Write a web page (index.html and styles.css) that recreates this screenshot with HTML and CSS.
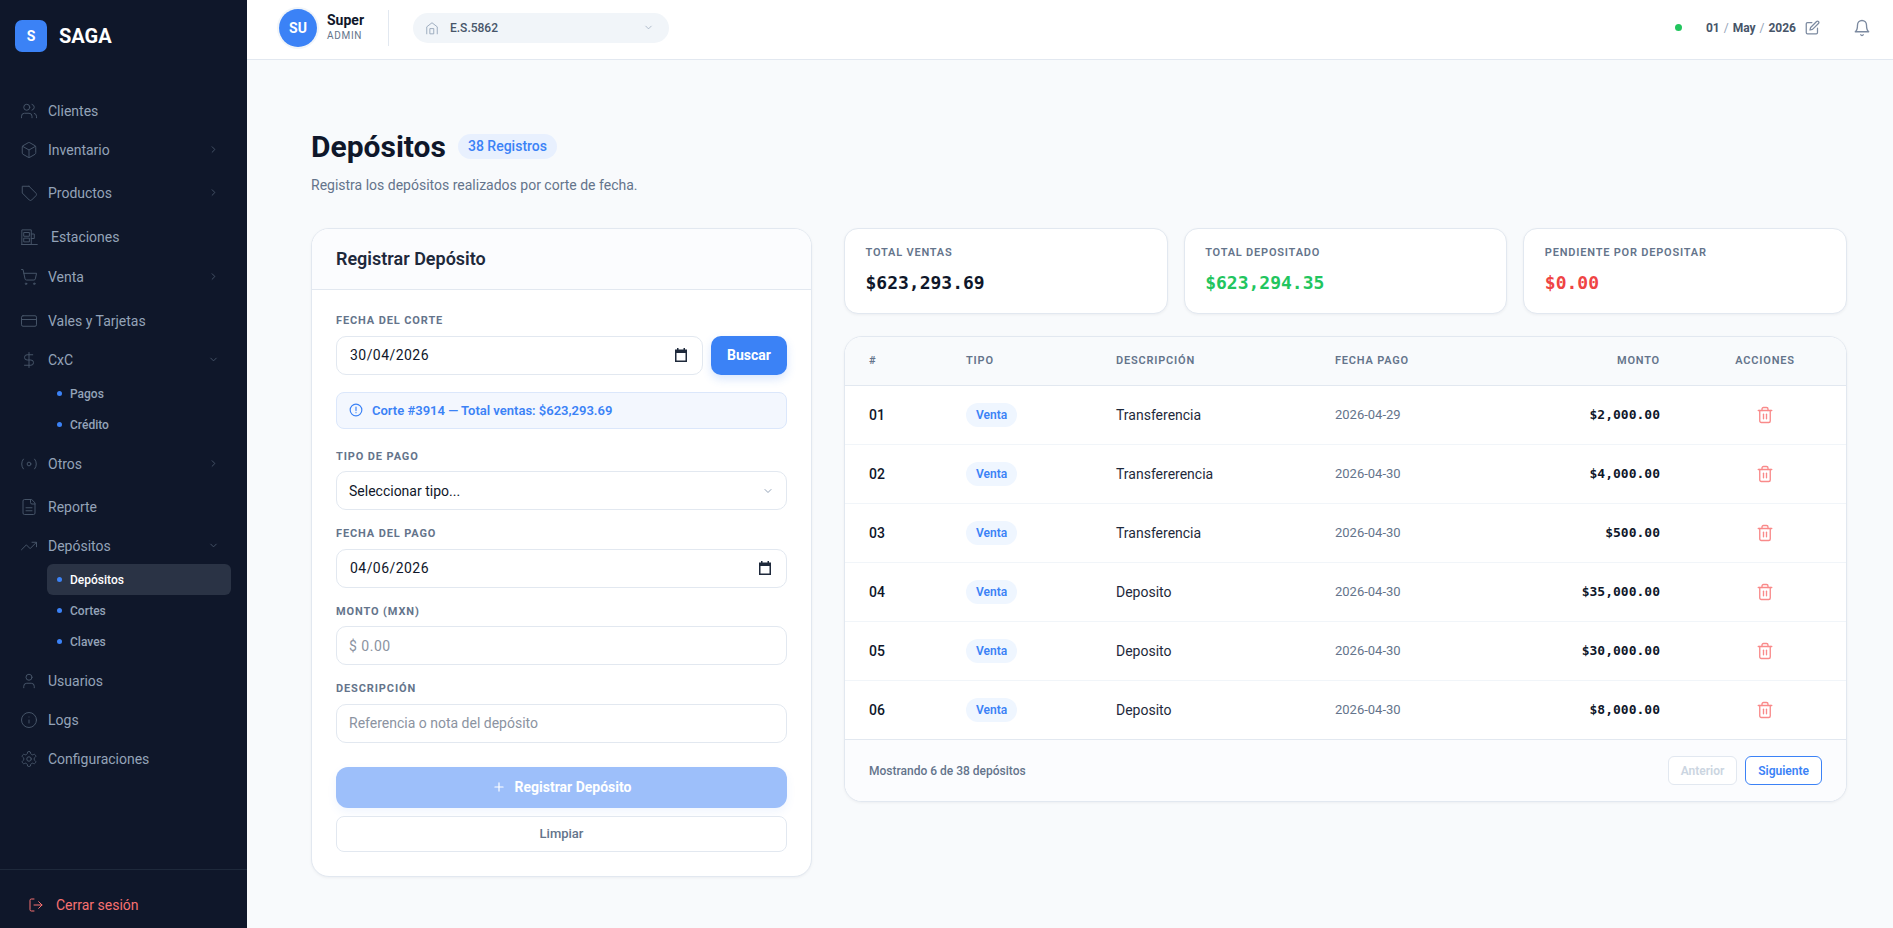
FILE: index.html
```html
<!DOCTYPE html>
<html lang="es">
<head>
    <meta charset="UTF-8">
    <meta name="viewport" content="width=device-width, initial-scale=1.0">
    <title>Depósitos - SAGA</title>
    <link rel="stylesheet" href="styles.css">
</head>
<body>
    <aside class="sidebar">
        <div class="brand">
            <div class="brand-logo">S</div>
            <span class="brand-name">SAGA</span>
        </div>

        <nav class="nav">
            <a class="nav-item">
                <svg class="nav-icon" viewBox="0 0 24 24"><path d="M16 21v-2a4 4 0 0 0-4-4H6a4 4 0 0 0-4 4v2"/><circle cx="9" cy="7" r="4"/><path d="M22 21v-2a4 4 0 0 0-3-3.87"/><path d="M16 3.13a4 4 0 0 1 0 7.75"/></svg>
                <span>Clientes</span>
            </a>
            <a class="nav-item nav-group">
                <svg class="nav-icon" viewBox="0 0 24 24"><path d="M21 8a2 2 0 0 0-1-1.73l-7-4a2 2 0 0 0-2 0l-7 4A2 2 0 0 0 3 8v8a2 2 0 0 0 1 1.73l7 4a2 2 0 0 0 2 0l7-4A2 2 0 0 0 21 16Z"/><path d="m3.3 7 8.7 5 8.7-5"/><path d="M12 22V12"/></svg>
                <span>Inventario</span>
                <svg class="nav-chevron" viewBox="0 0 24 24"><path d="m9 18 6-6-6-6"/></svg>
            </a>
            <a class="nav-item nav-group">
                <svg class="nav-icon" viewBox="0 0 24 24"><path d="M12 3H3v9l9.3 9.3c.9.9 2.4.9 3.3 0l5.7-5.7c.9-.9.9-2.4 0-3.3L12 3Z"/></svg>
                <span>Productos</span>
                <svg class="nav-chevron" viewBox="0 0 24 24"><path d="m9 18 6-6-6-6"/></svg>
            </a>
            <a class="nav-item nav-item-wide">
                <svg class="nav-icon" viewBox="0 0 24 24"><path d="M2 22h21"/><rect x="3" y="2.500" width="12" height="19.500"/><rect x="5.500" y="6" width="7" height="5"/><rect x="5.500" y="13.500" width="7" height="5"/><path d="M15 8h4v6h-4"/></svg>
                <span>Estaciones</span>
            </a>
            <a class="nav-item nav-group nav-group-last">
                <svg class="nav-icon" viewBox="0 0 24 24"><circle cx="8" cy="21" r="1"/><circle cx="19" cy="21" r="1"/><path d="M2.050 2.050h2l2.660 12.420a2 2 0 0 0 2 1.580h9.780a2 2 0 0 0 1.950-1.570l1.650-7.430H5.120"/></svg>
                <span>Venta</span>
                <svg class="nav-chevron" viewBox="0 0 24 24"><path d="m9 18 6-6-6-6"/></svg>
            </a>
            <a class="nav-item">
                <svg class="nav-icon" viewBox="0 0 24 24"><rect width="20" height="14" x="2" y="5" rx="2"/><path d="M2 10h20"/></svg>
                <span>Vales y Tarjetas</span>
            </a>
            <a class="nav-item nav-open">
                <svg class="nav-icon" viewBox="0 0 24 24"><path d="M12 2v20"/><path d="M17 5H9.500a3.500 3.500 0 0 0 0 7h5a3.500 3.500 0 0 1 0 7H6"/></svg>
                <span>CxC</span>
                <svg class="nav-chevron" viewBox="0 0 24 24"><path d="m6 9 6 6 6-6"/></svg>
            </a>
            <div class="subnav">
                <a class="subnav-item">Pagos</a>
                <a class="subnav-item">Crédito</a>
            </div>
            <a class="nav-item nav-group">
                <svg class="nav-icon" viewBox="0 0 24 24"><circle cx="12" cy="12" r="2.500"/><path d="M4.500 5.500a10 10 0 0 0 0 13"/><path d="M19.500 5.500a10 10 0 0 1 0 13"/></svg>
                <span>Otros</span>
                <svg class="nav-chevron" viewBox="0 0 24 24"><path d="m9 18 6-6-6-6"/></svg>
            </a>
            <a class="nav-item">
                <svg class="nav-icon" viewBox="0 0 24 24"><path d="M15 2H6a2 2 0 0 0-2 2v16a2 2 0 0 0 2 2h12a2 2 0 0 0 2-2V7Z"/><path d="M14 2v4a2 2 0 0 0 2 2h4"/><path d="M16 13H8"/><path d="M16 17H8"/></svg>
                <span>Reporte</span>
            </a>
            <a class="nav-item nav-open">
                <svg class="nav-icon" viewBox="0 0 24 24"><path d="M22 7l-8.500 8.500-5-5L2 17"/><path d="M16 7h6v6"/></svg>
                <span>Depósitos</span>
                <svg class="nav-chevron" viewBox="0 0 24 24"><path d="m6 9 6 6 6-6"/></svg>
            </a>
            <div class="subnav">
                <a class="subnav-item active">Depósitos</a>
                <a class="subnav-item">Cortes</a>
                <a class="subnav-item">Claves</a>
            </div>
            <a class="nav-item">
                <svg class="nav-icon" viewBox="0 0 24 24"><path d="M19 21v-2a4 4 0 0 0-4-4H9a4 4 0 0 0-4 4v2"/><circle cx="12" cy="7" r="4"/></svg>
                <span>Usuarios</span>
            </a>
            <a class="nav-item">
                <svg class="nav-icon" viewBox="0 0 24 24"><circle cx="12" cy="12" r="10"/><path d="M12 16v-4"/><path d="M12 8h.01"/></svg>
                <span>Logs</span>
            </a>
            <a class="nav-item">
                <svg class="nav-icon" viewBox="0 0 24 24"><path d="M12.220 2h-.44a2 2 0 0 0-2 2v.18a2 2 0 0 1-1 1.730l-.43.25a2 2 0 0 1-2 0l-.15-.08a2 2 0 0 0-2.730.73l-.22.38a2 2 0 0 0 .73 2.730l.15.1a2 2 0 0 1 1 1.720v.51a2 2 0 0 1-1 1.740l-.15.09a2 2 0 0 0-.73 2.730l.22.38a2 2 0 0 0 2.730.73l.15-.08a2 2 0 0 1 2 0l.43.25a2 2 0 0 1 1 1.730V20a2 2 0 0 0 2 2h.44a2 2 0 0 0 2-2v-.18a2 2 0 0 1 1-1.730l.43-.25a2 2 0 0 1 2 0l.15.08a2 2 0 0 0 2.730-.73l.22-.39a2 2 0 0 0-.73-2.730l-.15-.08a2 2 0 0 1-1-1.740v-.5a2 2 0 0 1 1-1.740l.15-.09a2 2 0 0 0 .73-2.730l-.22-.38a2 2 0 0 0-2.730-.73l-.15.08a2 2 0 0 1-2 0l-.43-.25a2 2 0 0 1-1-1.730V4a2 2 0 0 0-2-2z"/><circle cx="12" cy="12" r="3"/></svg>
                <span>Configuraciones</span>
            </a>
        </nav>

        <div class="sidebar-footer">
            <a class="logout">
                <svg class="logout-icon" viewBox="0 0 24 24"><path d="M9 21H5a2 2 0 0 1-2-2V5a2 2 0 0 1 2-2h4"/><path d="m16 17 5-5-5-5"/><path d="M21 12H9"/></svg>
                <span>Cerrar sesión</span>
            </a>
        </div>
    </aside>

    <div class="page">
        <header class="topbar">
            <div class="avatar">SU</div>
            <div class="user-info">
                <div class="user-name">Super</div>
                <div class="user-role">ADMIN</div>
            </div>
            <div class="topbar-divider"></div>
            <div class="station-select">
                <svg class="station-icon" viewBox="0 0 24 24"><path d="M3 22V10l9-7 9 7v12"/><rect x="9" y="13" width="6" height="9"/></svg>
                <span class="station-name">E.S.5862</span>
                <svg class="station-chevron" viewBox="0 0 24 24"><path d="m6 9 6 6 6-6"/></svg>
            </div>
            <div class="topbar-right">
                <span class="status-dot"></span>
                <div class="topbar-date">01 <i>/</i> May <i>/</i> 2026</div>
                <svg class="edit-icon" viewBox="0 0 24 24"><path d="M11 4H4a2 2 0 0 0-2 2v14a2 2 0 0 0 2 2h14a2 2 0 0 0 2-2v-7"/><path d="M18.500 2.500a2.121 2.121 0 0 1 3 3L12 15l-4 1 1-4 9.500-9.500z"/></svg>
                <svg class="bell-icon" viewBox="0 0 24 24"><path d="M6 8a6 6 0 0 1 12 0c0 7 3 9 3 9H3s3-2 3-9"/><path d="M10.300 21a1.940 1.940 0 0 0 3.400 0"/></svg>
            </div>
        </header>

        <main class="content">
            <div class="page-title-row">
                <h1 class="page-title">Depósitos</h1>
                <span class="count-badge">38 Registros</span>
            </div>
            <p class="page-subtitle">Registra los depósitos realizados por corte de fecha.</p>

            <div class="columns">
                <section class="form-card">
                    <div class="form-card-header">
                        <h2>Registrar Depósito</h2>
                    </div>
                    <div class="form-card-body">
                        <label class="field-label">Fecha del corte</label>
                        <div class="search-row">
                            <div class="input-box">
                                <input class="input date-input" type="text" value="30/04/2026">
                                <svg class="calendar-icon" viewBox="0 0 14 14"><path d="M3 0h1.500v1.500h5V0H11v1.500h2V14H1V1.500h2zM2.500 5v7.500h9V5z" fill-rule="evenodd"/></svg>
                            </div>
                            <button class="btn-search">Buscar</button>
                        </div>
                        <div class="info-box">
                            <svg viewBox="0 0 24 24"><circle cx="12" cy="12" r="10"/><path d="M12 7v6"/><path d="M12 16.500h.01"/></svg>
                            <span>Corte #3914 — Total ventas: $623,293.69</span>
                        </div>

                        <label class="field-label">Tipo de pago</label>
                        <div class="input-box field">
                            <select class="input select-input">
                                <option>Seleccionar tipo...</option>
                            </select>
                            <svg class="select-chevron" viewBox="0 0 24 24"><path d="m6 9 6 6 6-6"/></svg>
                        </div>

                        <label class="field-label">Fecha del pago</label>
                        <div class="input-box field">
                            <input class="input date-input" type="text" value="04/06/2026">
                            <svg class="calendar-icon" viewBox="0 0 14 14"><path d="M3 0h1.500v1.500h5V0H11v1.500h2V14H1V1.500h2zM2.500 5v7.500h9V5z" fill-rule="evenodd"/></svg>
                        </div>

                        <label class="field-label">Monto (MXN)</label>
                        <div class="input-box field">
                            <input class="input amount-input" type="text" placeholder="$ 0.00">
                        </div>

                        <label class="field-label">Descripción</label>
                        <div class="input-box field">
                            <input class="input" type="text" placeholder="Referencia o nota del depósito">
                        </div>

                        <button class="btn-submit">
                            <svg viewBox="0 0 24 24"><path d="M5 12h14"/><path d="M12 5v14"/></svg>
                            Registrar Depósito
                        </button>
                        <button class="btn-clear">Limpiar</button>
                    </div>
                </section>

                <div class="results">
                    <div class="stats">
                        <div class="stat-card">
                            <div class="stat-label">Total ventas</div>
                            <div class="stat-value">$623,293.69</div>
                        </div>
                        <div class="stat-card">
                            <div class="stat-label">Total depositado</div>
                            <div class="stat-value green">$623,294.35</div>
                        </div>
                        <div class="stat-card">
                            <div class="stat-label">Pendiente por depositar</div>
                            <div class="stat-value red">$0.00</div>
                        </div>
                    </div>

                    <section class="table-card">
                        <table class="deposits">
                            <thead>
                                <tr>
                                    <th class="col-num">#</th>
                                    <th class="col-type">Tipo</th>
                                    <th class="col-desc">Descripción</th>
                                    <th class="col-date">Fecha pago</th>
                                    <th class="col-amount">Monto</th>
                                    <th class="col-actions">Acciones</th>
                                </tr>
                            </thead>
                            <tbody>
                                <tr>
                                    <td class="col-num">01</td>
                                    <td><span class="type-badge">Venta</span></td>
                                    <td class="col-desc">Transferencia</td>
                                    <td class="col-date">2026-04-29</td>
                                    <td class="col-amount">$2,000.00</td>
                                    <td class="col-actions"><svg class="trash" viewBox="0 0 24 24"><path d="M3 6h18"/><path d="M19 6v14a2 2 0 0 1-2 2H7a2 2 0 0 1-2-2V6"/><path d="M8 6V4a2 2 0 0 1 2-2h4a2 2 0 0 1 2 2v2"/><path d="M10 11v6"/><path d="M14 11v6"/></svg></td>
                                </tr>
                                <tr>
                                    <td class="col-num">02</td>
                                    <td><span class="type-badge">Venta</span></td>
                                    <td class="col-desc">Transfererencia</td>
                                    <td class="col-date">2026-04-30</td>
                                    <td class="col-amount">$4,000.00</td>
                                    <td class="col-actions"><svg class="trash" viewBox="0 0 24 24"><path d="M3 6h18"/><path d="M19 6v14a2 2 0 0 1-2 2H7a2 2 0 0 1-2-2V6"/><path d="M8 6V4a2 2 0 0 1 2-2h4a2 2 0 0 1 2 2v2"/><path d="M10 11v6"/><path d="M14 11v6"/></svg></td>
                                </tr>
                                <tr>
                                    <td class="col-num">03</td>
                                    <td><span class="type-badge">Venta</span></td>
                                    <td class="col-desc">Transferencia</td>
                                    <td class="col-date">2026-04-30</td>
                                    <td class="col-amount">$500.00</td>
                                    <td class="col-actions"><svg class="trash" viewBox="0 0 24 24"><path d="M3 6h18"/><path d="M19 6v14a2 2 0 0 1-2 2H7a2 2 0 0 1-2-2V6"/><path d="M8 6V4a2 2 0 0 1 2-2h4a2 2 0 0 1 2 2v2"/><path d="M10 11v6"/><path d="M14 11v6"/></svg></td>
                                </tr>
                                <tr>
                                    <td class="col-num">04</td>
                                    <td><span class="type-badge">Venta</span></td>
                                    <td class="col-desc">Deposito</td>
                                    <td class="col-date">2026-04-30</td>
                                    <td class="col-amount">$35,000.00</td>
                                    <td class="col-actions"><svg class="trash" viewBox="0 0 24 24"><path d="M3 6h18"/><path d="M19 6v14a2 2 0 0 1-2 2H7a2 2 0 0 1-2-2V6"/><path d="M8 6V4a2 2 0 0 1 2-2h4a2 2 0 0 1 2 2v2"/><path d="M10 11v6"/><path d="M14 11v6"/></svg></td>
                                </tr>
                                <tr>
                                    <td class="col-num">05</td>
                                    <td><span class="type-badge">Venta</span></td>
                                    <td class="col-desc">Deposito</td>
                                    <td class="col-date">2026-04-30</td>
                                    <td class="col-amount">$30,000.00</td>
                                    <td class="col-actions"><svg class="trash" viewBox="0 0 24 24"><path d="M3 6h18"/><path d="M19 6v14a2 2 0 0 1-2 2H7a2 2 0 0 1-2-2V6"/><path d="M8 6V4a2 2 0 0 1 2-2h4a2 2 0 0 1 2 2v2"/><path d="M10 11v6"/><path d="M14 11v6"/></svg></td>
                                </tr>
                                <tr>
                                    <td class="col-num">06</td>
                                    <td><span class="type-badge">Venta</span></td>
                                    <td class="col-desc">Deposito</td>
                                    <td class="col-date">2026-04-30</td>
                                    <td class="col-amount">$8,000.00</td>
                                    <td class="col-actions"><svg class="trash" viewBox="0 0 24 24"><path d="M3 6h18"/><path d="M19 6v14a2 2 0 0 1-2 2H7a2 2 0 0 1-2-2V6"/><path d="M8 6V4a2 2 0 0 1 2-2h4a2 2 0 0 1 2 2v2"/><path d="M10 11v6"/><path d="M14 11v6"/></svg></td>
                                </tr>
                            </tbody>
                        </table>
                        <div class="table-footer">
                            <span class="table-count">Mostrando 6 de 38 depósitos</span>
                            <div class="pager">
                                <button class="pager-btn" disabled>Anterior</button>
                                <button class="pager-btn next">Siguiente</button>
                            </div>
                        </div>
                    </section>
                </div>
            </div>
        </main>
    </div>
</body>
</html>
```

FILE: styles.css
```css
* {
    box-sizing: border-box;
}

body {
    margin: 0;
    height: 100vh;
    display: flex;
    overflow: hidden;
    background: #f8fafc;
    color: #0f172a;
    font-family: Roboto, "Liberation Sans", sans-serif;
}

svg {
    fill: none;
    stroke: currentColor;
    stroke-linecap: round;
    stroke-linejoin: round;
    stroke-width: 1.5;
    flex-shrink: 0;
}

/* Sidebar */
.sidebar {
    width: 247px;
    flex-shrink: 0;
    display: flex;
    flex-direction: column;
    background: #0f172a;
}

.brand {
    display: flex;
    align-items: flex-start;
    gap: 12px;
    padding: 20px 15px 0;
    height: 90px;
}

.brand-logo {
    width: 32px;
    height: 32px;
    border-radius: 7px;
    background: #3b82f6;
    color: #fff;
    display: flex;
    align-items: center;
    justify-content: center;
    font-size: 14px;
    font-weight: 700;
}

.brand-name {
    color: #fff;
    font-size: 20px;
    font-weight: 700;
    line-height: 32px;
}

.nav {
    flex: 1;
    display: flex;
    flex-direction: column;
    padding-top: 1px;
}

.nav-item {
    height: 39px;
    display: flex;
    align-items: center;
    padding: 0 20px;
    color: #94a3b8;
    font-size: 14px;
}

.nav-group {
    margin-bottom: 4px;
}

.nav-group-last {
    margin-bottom: 5px;
}

.nav-item-wide {
    height: 41px;
    gap: 3px;
}

.nav-icon {
    width: 18px;
    height: 18px;
    margin-right: 10px;
    color: #475569;
    stroke-width: 1.3;
}

.nav-chevron {
    width: 11px;
    height: 11px;
    margin-left: auto;
    margin-right: 8px;
    color: #475569;
    stroke-width: 2;
}

.subnav {
    display: flex;
    flex-direction: column;
    padding: 0 16px 0 47px;
}

.subnav-item {
    height: 31px;
    display: flex;
    align-items: center;
    gap: 8px;
    padding-left: 10px;
    border-radius: 6px;
    color: #94a3b8;
    font-size: 12px;
    font-weight: 500;
}

.subnav-item::before {
    content: "";
    width: 5px;
    height: 5px;
    border-radius: 50%;
    background: #3b82f6;
}

.subnav-item.active {
    background: #2a3345;
    color: #fff;
}

.nav-open + .subnav {
    margin-top: -1px;
    margin-bottom: 4px;
}

.sidebar-footer {
    height: 59px;
    border-top: 1px solid #1e293b;
    display: flex;
    align-items: center;
    padding: 12px 28px 0;
}

.logout {
    display: flex;
    align-items: center;
    gap: 12px;
    color: #f87171;
    font-size: 14px;
}

.logout-icon {
    width: 16px;
    height: 16px;
}

/* Top bar */
.page {
    flex: 1;
    min-width: 0;
    display: flex;
    flex-direction: column;
}

.topbar {
    height: 60px;
    flex-shrink: 0;
    display: flex;
    align-items: center;
    padding: 0 22px 4px 32px;
    background: #fff;
    border-bottom: 1px solid #e2e8f0;
}

.avatar {
    width: 38px;
    height: 38px;
    border-radius: 50%;
    background: #3b82f6;
    color: #fff;
    display: flex;
    align-items: center;
    justify-content: center;
    font-size: 14px;
    font-weight: 700;
    box-shadow: 0 0 0 2px #f1f5f9;
}

.user-info {
    margin-left: 10px;
    width: 61px;
}

.user-name {
    font-size: 14px;
    font-weight: 700;
    line-height: 17px;
}

.user-role {
    font-size: 10px;
    letter-spacing: .7px;
    color: #64748b;
    line-height: 14px;
}

.topbar-divider {
    width: 1px;
    height: 36px;
    background: #e2e8f0;
    margin: 0 24px 0 0;
}

.station-select {
    width: 256px;
    height: 30px;
    display: flex;
    align-items: center;
    padding: 0 15px 0 12px;
    border-radius: 15px;
    background: #f1f5f9;
}

.station-icon {
    width: 14px;
    height: 14px;
    color: #94a3b8;
}

.station-name {
    margin-left: 11px;
    font-size: 12px;
    font-weight: 500;
    color: #475569;
}

.station-chevron {
    width: 11px;
    height: 11px;
    margin-left: auto;
    color: #94a3b8;
}

.topbar-right {
    margin-left: auto;
    display: flex;
    align-items: center;
}

.status-dot {
    width: 7px;
    height: 7px;
    border-radius: 50%;
    background: #22c55e;
    margin-right: 24px;
}

.topbar-date {
    font-size: 12px;
    font-weight: 700;
    color: #475569;
    word-spacing: 1px;
}

.topbar-date i {
    font-style: normal;
    font-weight: 400;
    color: #94a3b8;
}

.edit-icon {
    width: 15px;
    height: 15px;
    margin-left: 9px;
    color: #7c8aa0;
    stroke-width: 2;
}

.bell-icon {
    width: 18px;
    height: 18px;
    margin-left: 33px;
    color: #7c8aa0;
    stroke-width: 1.8;
}

/* Page content */
.content {
    flex: 1;
    padding: 68px 46px 0 64px;
}

.page-title-row {
    display: flex;
    align-items: center;
    gap: 12px;
    height: 36px;
}

.page-title {
    margin: 0;
    font-size: 30px;
    font-weight: 700;
}

.count-badge {
    height: 25px;
    display: flex;
    align-items: center;
    padding: 0 10px;
    border-radius: 13px;
    background: #e8f0fe;
    color: #3b82f6;
    font-size: 14px;
    font-weight: 500;
}

.page-subtitle {
    margin: 12px 0 0;
    font-size: 14px;
    line-height: 18px;
    color: #64748b;
}

.columns {
    display: grid;
    grid-template-columns: 501px 1fr;
    gap: 32px;
    margin-top: 34px;
    align-items: start;
}

/* Form card */
.form-card {
    background: #fff;
    border: 1px solid #e2e8f0;
    border-radius: 18px;
    box-shadow: 0 1px 3px rgba(15, 23, 42, .05);
    overflow: hidden;
}

.form-card-header {
    height: 61px;
    display: flex;
    align-items: center;
    padding: 0 24px 2px;
    background: #fbfcfe;
    border-bottom: 1px solid #e2e8f0;
}

.form-card-header h2 {
    margin: 0;
    font-size: 18px;
    font-weight: 600;
    color: #1e293b;
}

.form-card-body {
    padding: 24px 24px 24px;
}

.field-label {
    display: block;
    height: 14px;
    margin-bottom: 7.500px;
    font-size: 11px;
    line-height: 14px;
    font-weight: 700;
    letter-spacing: .88px;
    text-transform: uppercase;
    color: #64748b;
}

.search-row {
    display: flex;
    gap: 8px;
    margin-top: .5px;
}

.input-box {
    position: relative;
    flex: 1;
    height: 39px;
    display: flex;
    align-items: center;
    padding: 0 12px;
    background: #fff;
    border: 1px solid #e2e8f0;
    border-radius: 10px;
}

.input-box.field {
    margin-bottom: 17px;
}

.input {
    flex: 1;
    min-width: 0;
    border: 0;
    outline: 0;
    padding: 0;
    background: transparent;
    font-family: inherit;
    font-size: 14px;
    color: #0f172a;
}

.input::placeholder {
    color: #8b93a1;
}

.date-input {
    letter-spacing: .45px;
    margin-left: 1px;
}

.amount-input::placeholder {
    letter-spacing: .5px;
}

.select-input {
    appearance: none;
}

.calendar-icon {
    width: 14px;
    height: 14px;
    fill: #1e293b;
    stroke: none;
    margin-right: 2px;
}

.select-chevron {
    position: absolute;
    right: 12px;
    top: 13px;
    width: 12px;
    height: 12px;
    color: #94a3b8;
    stroke-width: 2;
    pointer-events: none;
}

.btn-search {
    width: 76px;
    border: 0;
    border-radius: 10px;
    background: #3b82f6;
    color: #fff;
    font-family: inherit;
    font-size: 14px;
    font-weight: 700;
    box-shadow: 0 4px 10px rgba(59, 130, 246, .2);
}

.info-box {
    height: 37px;
    display: flex;
    align-items: center;
    gap: 9px;
    margin: 17px 0 21px;
    padding: 0 12px;
    background: #f3f7fe;
    border: 1px solid #dbe7fb;
    border-radius: 8px;
    color: #3b82f6;
    font-size: 13px;
    font-weight: 600;
}

.info-box svg {
    width: 14px;
    height: 14px;
    stroke-width: 2;
}

.btn-submit {
    width: 100%;
    height: 41px;
    display: flex;
    align-items: center;
    justify-content: center;
    gap: 9px;
    margin-top: 24px;
    border: 0;
    border-radius: 12px;
    background: #9dbffa;
    color: #fff;
    font-family: inherit;
    font-size: 14px;
    font-weight: 700;
    box-shadow: 0 4px 10px rgba(59, 130, 246, .08);
}

.btn-submit svg {
    width: 14px;
    height: 14px;
    stroke-width: 2;
}

.btn-clear {
    width: 100%;
    height: 36px;
    margin-top: 8px;
    background: #fff;
    border: 1px solid #e2e8f0;
    border-radius: 8px;
    color: #64748b;
    font-family: inherit;
    font-size: 13px;
    font-weight: 500;
}

/* Stats */
.results {
    display: flex;
    flex-direction: column;
    gap: 22px;
}

.stats {
    display: grid;
    grid-template-columns: repeat(3, 1fr);
    gap: 16px;
}

.stat-card {
    height: 86px;
    padding: 17px 20.500px;
    background: #fff;
    border: 1px solid #e2e8f0;
    border-radius: 14px;
    box-shadow: 0 1px 3px rgba(15, 23, 42, .05);
}

.stat-label {
    font-size: 11px;
    line-height: 13px;
    font-weight: 600;
    letter-spacing: .8px;
    text-transform: uppercase;
    color: #64748b;
}

.stat-value {
    margin-top: 12px;
    font-family: "DejaVu Sans Mono", monospace;
    font-size: 18px;
    line-height: 24px;
    font-weight: 700;
}

.stat-value.green {
    color: #22c55e;
}

.stat-value.red {
    color: #ef4444;
}

/* Table */
.table-card {
    background: #fff;
    border: 1px solid #e2e8f0;
    border-radius: 18px;
    box-shadow: 0 1px 3px rgba(15, 23, 42, .05);
    overflow: hidden;
}

.deposits {
    width: 100%;
    table-layout: fixed;
    border-collapse: collapse;
}

.deposits th {
    height: 48px;
    padding: 0 24px;
    background: #f8fafc;
    border-bottom: 1px solid #e2e8f0;
    text-align: left;
    font-size: 11px;
    font-weight: 600;
    letter-spacing: .8px;
    text-transform: uppercase;
    color: #64748b;
}

.deposits td {
    height: 59px;
    padding: 0 24px;
    border-bottom: 1px solid #f1f5f9;
    font-size: 14px;
}

.deposits tr:last-child td {
    border-bottom: 1px solid #e2e8f0;
}

.deposits th.col-num {
    width: 97px;
}

.deposits th.col-type {
    width: 150px;
}

.deposits th.col-desc {
    width: 219px;
}

.deposits th.col-date {
    width: 249px;
}

.deposits th.col-amount {
    width: 124px;
    padding: 0 24px 0 0;
    text-align: right;
}

.deposits th.col-actions {
    text-align: center;
    padding: 0;
}

.deposits td.col-num {
    font-weight: 500;
}

.deposits td.col-desc {
    color: #1e293b;
}

.deposits td.col-date {
    font-size: 13px;
    color: #64748b;
}

.deposits td.col-amount {
    padding: 0 24px 0 0;
    text-align: right;
    font-family: "DejaVu Sans Mono", monospace;
    font-size: 13px;
    font-weight: 700;
}

.deposits td.col-actions {
    text-align: center;
    padding: 0;
    line-height: 0;
}

.type-badge {
    display: inline-flex;
    align-items: center;
    height: 24px;
    padding: 0 10px;
    border-radius: 12px;
    background: #eff6ff;
    color: #3b82f6;
    font-size: 12px;
    font-weight: 600;
}

.trash {
    width: 18px;
    height: 18px;
    color: #f98a8a;
    stroke-width: 1.8;
}

.table-footer {
    height: 61px;
    display: flex;
    align-items: center;
    justify-content: space-between;
    padding: 1px 24px 0;
    background: #fbfcfe;
}

.table-count {
    font-size: 12px;
    font-weight: 500;
    color: #64748b;
}

.pager {
    display: flex;
    gap: 8px;
}

.pager-btn {
    height: 29px;
    padding: 0 12px;
    background: #fff;
    border: 1px solid #e2e8f0;
    border-radius: 6px;
    color: #cbd5e1;
    font-family: inherit;
    font-size: 12px;
    font-weight: 600;
}

.pager-btn.next {
    border-color: #3b82f6;
    color: #3b82f6;
}
```
